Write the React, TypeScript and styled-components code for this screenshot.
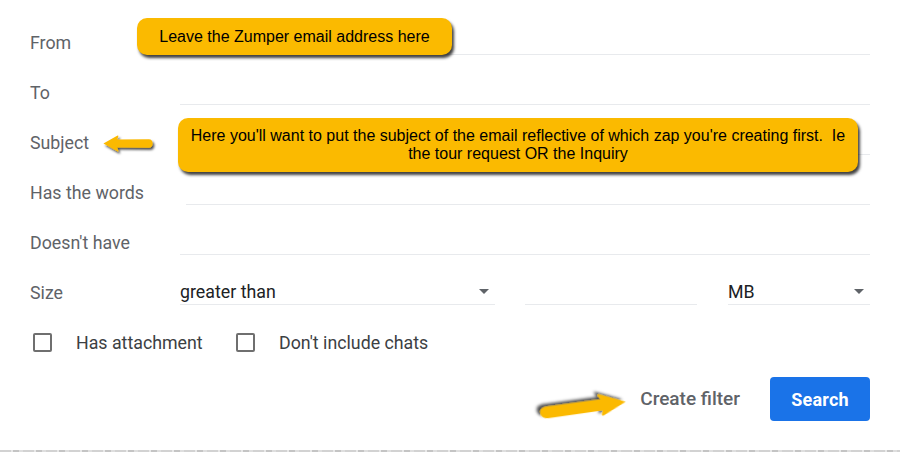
import React from "react";
import styled, { createGlobalStyle } from "styled-components";

const Global = createGlobalStyle`
  html, body { margin: 0; padding: 0; background: #fff; }
  body { font-family: Roboto, "Noto Sans", Arial, sans-serif; }
  * { box-sizing: border-box; }
`;

const Page = styled.div`
  position: relative;
  width: 900px;
  height: 452px;
  overflow: hidden;
  background: #fff;
  padding: 5px 30px 0 30px;
  display: flex;
  flex-direction: column;
`;

const Row = styled.div`
  display: flex;
  align-items: flex-end;
  height: 50px;
`;

const Label = styled.div`
  width: 150px;
  flex: none;
  font-size: 17.8px;
  line-height: 24px;
  height: 24px;
  color: #5f6368;
`;

const Field = styled.div<{ $inset?: number }>`
  flex: 1;
  height: 25px;
  margin-left: ${(p) => p.$inset ?? 0}px;
  border-bottom: 1px solid #e8eaed;
`;

const SelectBox = styled.div<{ $w: number }>`
  width: ${(p) => p.$w}px;
  flex: none;
  height: 25px;
  border-bottom: 1px solid #e8eaed;
  display: flex;
  align-items: flex-start;
  justify-content: space-between;
  font-size: 17.8px;
  line-height: 23px;
  color: #202124;
  padding-right: 6px;
`;

const Caret = styled.span`
  width: 0;
  height: 0;
  border-left: 5px solid transparent;
  border-right: 5px solid transparent;
  border-top: 5px solid #5f6368;
  margin-top: 9px;
`;

const Gap = styled.div<{ $w: number }>`
  width: ${(p) => p.$w}px;
  flex: none;
`;

const CheckRow = styled.div`
  display: flex;
  align-items: center;
  height: 24px;
  margin-top: 25px;
`;

const Check = styled.label<{ $w: number }>`
  display: flex;
  align-items: center;
  width: ${(p) => p.$w}px;
  font-size: 17.8px;
  color: #3c4043;
`;

const Box = styled.span`
  width: 19px;
  height: 19px;
  border: 2px solid #6f6f6f;
  border-radius: 2px;
  margin-left: 3px;
  margin-right: 24px;
  flex: none;
`;

const Actions = styled.div`
  display: flex;
  justify-content: flex-end;
  align-items: center;
  gap: 22px;
  margin-top: 23px;
`;

const TextButton = styled.div`
  font-size: 19px;
  font-weight: 500;
  color: #5f6368;
  padding: 0 8px;
  margin-top: -1px;
`;

const PrimaryButton = styled.div`
  width: 100px;
  height: 44px;
  border-radius: 4px;
  background: #1a73e8;
  color: #fff;
  font-size: 18px;
  font-weight: 700;
  display: flex;
  align-items: center;
  justify-content: center;
  letter-spacing: 0.2px;
`;

const BottomStrip = styled.div`
  position: absolute;
  left: 0;
  right: 0;
  bottom: 0;
  height: 2px;
  background: repeating-linear-gradient(90deg, #d2d2d2 0 11px, #e8e8e8 11px 13px, #c4c4c4 13px 19px, #dedede 19px 23px);
`;

const Callout = styled.div<{ $x: number; $y: number; $w: number; $h: number }>`
  position: absolute;
  left: ${(p) => p.$x}px;
  top: ${(p) => p.$y}px;
  width: ${(p) => p.$w}px;
  height: ${(p) => p.$h}px;
  background: #fbba00;
  border-radius: 10px;
  box-shadow: 2px 3px 3px rgba(0, 0, 0, 0.75);
  font-family: "Liberation Sans", Arial, sans-serif;
  color: #000;
  font-size: 16px;
  line-height: 18px;
  text-align: center;
  display: flex;
  align-items: center;
  justify-content: center;
  padding: 0 4px;
`;

const ArrowSvg = styled.svg<{ $x: number; $y: number }>`
  position: absolute;
  left: ${(p) => p.$x}px;
  top: ${(p) => p.$y}px;
  overflow: visible;
`;

function Arrow({ x, y, w, h, rotate }: { x: number; y: number; w: number; h: number; rotate: number }) {
  // Arrow drawn pointing left in a 60x20 box, then rotated
  return (
    <ArrowSvg $x={x} $y={y} width={w} height={h} viewBox="0 0 60 20" preserveAspectRatio="none">
      <defs>
        <filter id={`sh${x}`} x="-20%" y="-50%" width="150%" height="220%">
          <feDropShadow dx="2" dy="2.5" stdDeviation="1.2" floodColor="#000" floodOpacity="0.7" />
        </filter>
      </defs>
      <g transform={`rotate(${rotate} 30 10)`} filter={`url(#sh${x})`}>
        <path
          d="M0.5 10 L17 0.8 Q19 0 18.3 2.2 L17 5.2 L55 5 Q59.5 5.3 59.5 10 Q59.5 14.7 55 15 L17 14.8 L18.3 17.8 Q19 20 17 19.2 Z"
          fill="#fbb900"
        />
      </g>
    </ArrowSvg>
  );
}

export default function App() {
  return (
    <>
      <Global />
      <Page>
        <Row>
          <Label>From</Label>
          <Field />
        </Row>
        <Row>
          <Label>To</Label>
          <Field />
        </Row>
        <Row>
          <Label>Subject</Label>
          <Field />
        </Row>
        <Row>
          <Label>Has the words</Label>
          <Field $inset={6} />
        </Row>
        <Row>
          <Label>Doesn't have</Label>
          <Field />
        </Row>
        <Row>
          <Label>Size</Label>
          <SelectBox $w={315}>
            greater than
            <Caret />
          </SelectBox>
          <Gap $w={30} />
          <Field style={{ flex: "none", width: 172 }} />
          <Gap $w={31} />
          <SelectBox $w={142}>
            MB
            <Caret />
          </SelectBox>
        </Row>
        <CheckRow>
          <Check $w={203}>
            <Box />
            Has attachment
          </Check>
          <Check $w={300}>
            <Box />
            Don't include chats
          </Check>
        </CheckRow>
        <Actions>
          <TextButton>Create filter</TextButton>
          <PrimaryButton>Search</PrimaryButton>
        </Actions>

        <Callout $x={137} $y={18} $w={315} $h={37}>
          Leave the Zumper email address here
        </Callout>
        <Callout $x={178} $y={118} $w={680} $h={54}>
          Here you'll want to put the subject of the email reflective of which zap you're creating first.&nbsp; Ie
          <br />
          the tour request OR the Inquiry
        </Callout>
        <Arrow x={103} y={135} w={50} h={17} rotate={0} />
        <Arrow x={539} y={396} w={88} h={23} rotate={170} />
        <BottomStrip />
      </Page>
    </>
  );
}
